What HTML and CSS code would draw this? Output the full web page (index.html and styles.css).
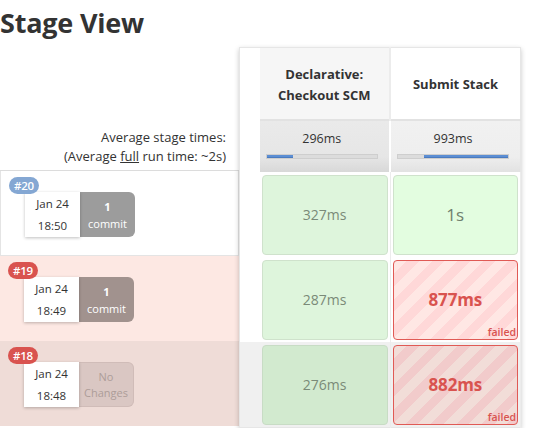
FILE: index.html
```html
<!DOCTYPE html>
<html>
<head>
<meta charset="utf-8">
<link rel="stylesheet" href="styles.css">
</head>
<body>
<h1 class="title">Stage View</h1>
<div class="stage-view">
  <div class="builds">
    <div class="builds-head">
      <div>Average stage times:</div>
      <div>(Average <u>full</u> run time: ~2s)</div>
    </div>
    <div class="build build-1">
      <div class="build-info">
        <span class="badge badge-blue">#20</span>
        <div class="date"><span>Jan 24</span><span>18:50</span></div>
        <div class="changes changes-1"><b>1</b><span>commit</span></div>
      </div>
    </div>
    <div class="build build-2">
      <div class="build-info">
        <span class="badge badge-red">#19</span>
        <div class="date"><span>Jan 24</span><span>18:49</span></div>
        <div class="changes changes-2"><b>1</b><span>commit</span></div>
      </div>
    </div>
    <div class="build build-3">
      <div class="build-info">
        <span class="badge badge-red">#18</span>
        <div class="date"><span>Jan 24</span><span>18:48</span></div>
        <div class="changes changes-none"><span>No</span><span>Changes</span></div>
      </div>
    </div>
  </div>
  <table class="stages">
    <thead>
      <tr class="head-row">
        <th class="gutter"></th>
        <th class="stage-head odd">Declarative:<br>Checkout SCM</th>
        <th class="stage-head even">Submit Stack</th>
      </tr>
      <tr class="avg-row">
        <td class="gutter"></td>
        <td class="avg odd">
          <div class="avg-time">296ms</div>
          <div class="bar"><div class="fill" style="margin-left:0;width:26px"></div></div>
        </td>
        <td class="avg even">
          <div class="avg-time">993ms</div>
          <div class="bar"><div class="fill" style="margin-left:26px;width:86px"></div></div>
        </td>
      </tr>
    </thead>
    <tbody>
      <tr class="row">
        <td class="gutter"></td>
        <td class="slot"><div class="cell ok ok-1">327ms</div></td>
        <td class="slot"><div class="cell ok ok-light big">1s</div></td>
      </tr>
      <tr class="row">
        <td class="gutter"></td>
        <td class="slot"><div class="cell ok ok-1">287ms</div></td>
        <td class="slot"><div class="cell failed failed-2"><span class="ms">877ms</span><span class="tag">failed</span></div></td>
      </tr>
      <tr class="row row-hover">
        <td class="gutter"></td>
        <td class="slot"><div class="cell ok ok-3">276ms</div></td>
        <td class="slot"><div class="cell failed failed-3"><span class="ms">882ms</span><span class="tag">failed</span></div></td>
      </tr>
    </tbody>
  </table>
</div>
</body>
</html>
```
FILE: styles.css
```css
* { box-sizing: border-box; }
body {
  margin: 0;
  font-family: "Open Sans", "Noto Sans", sans-serif;
  color: #333;
  background: #fff;
}
.title {
  margin: 0;
  height: 47px;
  line-height: 46px;
  font-size: 27px;
  font-weight: 700;
  letter-spacing: -0.2px;
}
.stage-view {
  display: flex;
  align-items: flex-start;
}
.builds {
  width: 239px;
  flex: none;
}
.builds-head {
  height: 124px;
  display: flex;
  flex-direction: column;
  justify-content: flex-end;
  align-items: flex-end;
  padding: 0 13px 4px 0;
  font-size: 13px;
  line-height: 19px;
  color: #333;
  border-bottom: 1px solid #dcdcdc;
}
.build {
  height: 85px;
  padding: 6px 0 0 8px;
}
.build-1 {
  background: #fff;
  border: 1px solid #e4e4e4;
  border-top: none;
}
.build-2 { background: #fde8e3; }
.build-3 { background: #efdcd7; }
.build-info {
  position: relative;
  display: flex;
  padding: 15px 0 0 16px;
}
.badge {
  position: absolute;
  left: 0;
  top: 0;
  z-index: 2;
  height: 17px;
  padding: 0 5px;
  border-radius: 9px;
  color: #fff;
  font-size: 11.5px;
  line-height: 17px;
  font-weight: 600;
  letter-spacing: -0.3px;
}
.badge-blue { background: #84a7d3; }
.badge-red { background: #d9534f; }
.date {
  width: 55px;
  height: 45px;
  background: #fff;
  box-shadow: 0 1px 3px rgba(0,0,0,0.25);
  display: flex;
  flex-direction: column;
  align-items: center;
  justify-content: center;
  font-size: 11.5px;
  line-height: 22px;
  color: #333;
  position: relative;
  z-index: 1;
}
.changes {
  width: 55px;
  height: 45px;
  border-radius: 0 6px 6px 0;
  display: flex;
  flex-direction: column;
  align-items: center;
  justify-content: center;
  font-size: 11px;
  line-height: 17px;
  color: #fff;
}
.changes b { font-weight: 700; }
.changes-1 { background: #9c9c9c; }
.changes-2 { background: #a1928e; }
.changes-none {
  background: #dac7c3;
  border: 1px solid #d0bcb8;
  border-left: none;
  color: #ad9d99;
  line-height: 16px;
}

.stages {
  width: 282px;
  border-collapse: collapse;
  table-layout: fixed;
  box-shadow: 0 2px 5px rgba(0,0,0,0.22);
  border: 1px solid #e6e6e6;
  flex: none;
}
.stages td, .stages th { padding: 0; }
.gutter { width: 20px; background: #fff; }
.head-row th { height: 72px; }
.stage-head {
  width: 130px;
  font-size: 13px;
  font-weight: 700;
  line-height: 21px;
  text-align: center;
  vertical-align: middle;
  color: #333;
  padding-top: 3px !important;
}
.stage-head.odd { background: #f6f6f6; border-right: 2px solid #ececec; }
.stage-head.even { background: #fff; }
.avg-row td { height: 52px; }
.avg {
  vertical-align: top;
  padding: 8px 11px 0 6px !important;
  text-align: center;
  font-size: 12.5px;
  border-top: 2px solid #e2e2e2;
}
.avg.odd { background: linear-gradient(#eaeaea, #e6e6e6 70%, #d8d8d8); border-right: 2px solid #fff; }
.avg.even { background: linear-gradient(#f1f1f1, #eeeeee 70%, #e2e2e2); }
.avg-time { line-height: 20px; margin-bottom: 5px; }
.bar {
  height: 5px;
  background: #dcdcdc;
  border: 1px solid #cecece;
  display: flex;
}
.fill {
  height: 100%;
  background: #5c8ed3;
  border-bottom: 1px solid #4a7bc0;
}
.row td { height: 85px; }
.slot {
  padding: 3px 2px 2px 2px !important;
  background: #fff;
  border-right: 1px solid #ececec;
}
.row-hover td { background: #f0f0f0; }
.cell {
  height: 80px;
  border-radius: 4px;
  border: 1px solid #cfe2cc;
  display: flex;
  align-items: center;
  justify-content: center;
  font-size: 14px;
  color: #7a8a78;
  position: relative;
}
.ok-1 { background: #def5dc; }
.ok-light { background: #e3fde0; }
.ok-3 { background: #d2eacf; border-color: #c8dcc5; }
.big { font-size: 17px; color: #6f7f6d; }
.failed {
  border: 1px solid #e05a55;
  color: #d9534f;
}
.failed-2 {
  background: repeating-linear-gradient(135deg, #ffe7e4 0 9px, #ffd8d8 9px 18px);
}
.failed-3 {
  background: repeating-linear-gradient(135deg, #f2ddd8 0 9px, #f2cbcb 9px 18px);
}
.ms {
  font-size: 17px;
  font-weight: 700;
  letter-spacing: -0.2px;
}
.tag {
  position: absolute;
  right: 1px;
  bottom: 0;
  font-size: 10.5px;
  font-weight: 600;
  line-height: 14px;
}
```
